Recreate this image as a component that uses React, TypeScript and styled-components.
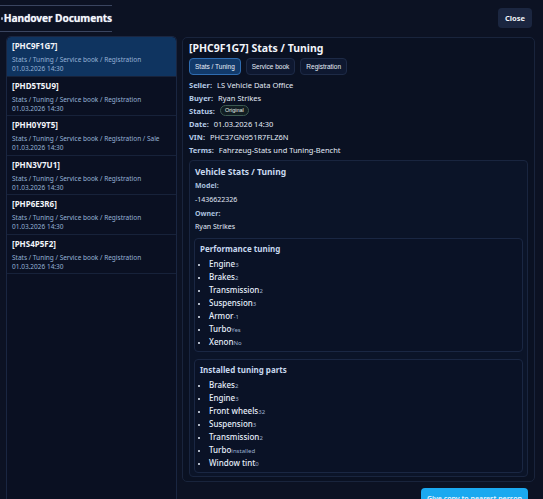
import React, { useState } from "react";
import styled, { createGlobalStyle } from "styled-components";

const GlobalStyle = createGlobalStyle`
  html, body {
    margin: 0;
    padding: 0;
    background: #0c1223;
    height: 100%;
    overflow: hidden;
  }
  * { box-sizing: border-box; }
  body {
    font-family: "Noto Sans", "Open Sans", sans-serif;
    color: #e6eefa;
  }
`;

interface Doc {
  code: string;
  pages: string;
  date: string;
}

const docs: Doc[] = [
  { code: "PHC9F1G7", pages: "Stats / Tuning / Service book / Registration", date: "01.03.2026 14:30" },
  { code: "PHD5T5U9", pages: "Stats / Tuning / Service book / Registration", date: "01.03.2026 14:30" },
  { code: "PHH0Y9T5", pages: "Stats / Tuning / Service book / Registration / Sale", date: "01.03.2026 14:30" },
  { code: "PHN3V7U1", pages: "Stats / Tuning / Service book / Registration", date: "01.03.2026 14:30" },
  { code: "PHP6E3R6", pages: "Stats / Tuning / Service book / Registration", date: "01.03.2026 14:30" },
  { code: "PHS4P5F2", pages: "Stats / Tuning / Service book / Registration", date: "01.03.2026 14:30" },
];

const tabs = ["Stats / Tuning", "Service book", "Registration"];

const performance = [
  { name: "Engine", value: "3" },
  { name: "Brakes", value: "2" },
  { name: "Transmission", value: "2" },
  { name: "Suspension", value: "3" },
  { name: "Armor", value: "-1" },
  { name: "Turbo", value: "Yes" },
  { name: "Xenon", value: "No" },
];

const parts = [
  { name: "Brakes", value: "2" },
  { name: "Engine", value: "3" },
  { name: "Front wheels", value: "32" },
  { name: "Suspension", value: "3" },
  { name: "Transmission", value: "2" },
  { name: "Turbo", value: "installed" },
  { name: "Window tint", value: "0" },
];

const App: React.FC = () => {
  const [active, setActive] = useState<number>(0);
  const [tab, setTab] = useState<number>(0);
  const doc = docs[active];

  return (
    <>
      <GlobalStyle />
      <Page>
        <Header>
          <Title>
            <Dot />
            Handover Documents
          </Title>
          <CloseButton>Close</CloseButton>
        </Header>
        <Body>
          <Sidebar>
            {docs.map((d, i) => (
              <DocItem key={d.code} $active={i === active} onClick={() => setActive(i)}>
                <DocCode>[{d.code}]</DocCode>
                <DocMeta>{d.pages}</DocMeta>
                <DocMeta>{d.date}</DocMeta>
              </DocItem>
            ))}
          </Sidebar>
          <Main>
            <Panel>
              <PanelTitle>[{doc.code}] Stats / Tuning</PanelTitle>
              <Tabs>
                {tabs.map((t, i) => (
                  <Tab key={t} $active={i === tab} onClick={() => setTab(i)}>
                    {t}
                  </Tab>
                ))}
              </Tabs>
              <Fields>
                <Field><Label>Seller:</Label>LS Vehicle Data Office</Field>
                <Field><Label>Buyer:</Label>Ryan Strikes</Field>
                <Field><Label>Status:</Label><Badge>Original</Badge></Field>
                <Field><Label>Date:</Label>01.03.2026 14:30</Field>
                <Field><Label>VIN:</Label>PHC37GN951R7FLZ6N</Field>
                <Field><Label>Terms:</Label>Fahrzeug-Stats und Tuning-Bencht</Field>
              </Fields>
              <Card>
                <CardTitle>Vehicle Stats / Tuning</CardTitle>
                <InfoLabel>Model:</InfoLabel>
                <InfoValue>-1436622326</InfoValue>
                <InfoLabel>Owner:</InfoLabel>
                <InfoValue>Ryan Strikes</InfoValue>
                <SubCards>
                  <SubCard>
                    <SubTitle>Performance tuning</SubTitle>
                    <List>
                      {performance.map((p) => (
                        <li key={p.name}>{p.name}<Small>{p.value}</Small></li>
                      ))}
                    </List>
                  </SubCard>
                  <SubCard>
                    <SubTitle>Installed tuning parts</SubTitle>
                    <List>
                      {parts.map((p) => (
                        <li key={p.name}>{p.name}<Small>{p.value}</Small></li>
                      ))}
                    </List>
                  </SubCard>
                </SubCards>
              </Card>
            </Panel>
            <Footer>
              <GiveButton>Give copy to nearest person</GiveButton>
            </Footer>
          </Main>
        </Body>
      </Page>
    </>
  );
};

export default App;

const Page = styled.div`
  width: 543px;
  height: 499px;
  background: #0c1223;
  display: flex;
  flex-direction: column;
  overflow: hidden;
`;

const Header = styled.div`
  height: 36px;
  flex-shrink: 0;
  display: flex;
  align-items: center;
  justify-content: space-between;
  padding: 0 11px 0 0;
`;

const Title = styled.h1`
  margin: 0;
  display: flex;
  align-items: center;
  gap: 1px;
  width: 112px;
  height: 27px;
  padding-left: 1px;
  font-size: 10.2px;
  font-weight: 700;
  letter-spacing: -0.1px;
  color: #f4f7fc;
  white-space: nowrap;
  overflow: visible;
  border-top: 1px solid #3a4560;
  border-bottom: 1px solid #3a4560;
  text-shadow: 0 0 1px #9aa4b8;
`;

const Dot = styled.span`
  width: 3px;
  height: 3px;
  border-radius: 50%;
  background: #aab3c6;
`;

const CloseButton = styled.button`
  all: unset;
  cursor: pointer;
  padding: 5px 7px;
  border-radius: 4px;
  background: #1b2640;
  color: #f2f5fa;
  font-size: 7.5px;
  font-weight: 700;
`;

const Body = styled.div`
  flex: 1;
  display: grid;
  grid-template-columns: 171px 1fr;
  gap: 5px;
  padding: 0 8px 0 6px;
  min-height: 0;
`;

const Sidebar = styled.div`
  background: #0a1022;
  border: 1px solid #1a2641;
  border-bottom: none;
  border-radius: 5px 5px 0 0;
  height: 480px;
  overflow: hidden;
`;

const DocItem = styled.div<{ $active: boolean }>`
  height: 39.5px;
  padding: 3px 5px 0;
  cursor: pointer;
  background: ${(p) => (p.$active ? "#0f3460" : "transparent")};
  border-bottom: 1px solid #17223a;
  border-radius: ${(p) => (p.$active ? "4px 4px 0 0" : "0")};
`;

const DocCode = styled.div`
  font-size: 8px;
  font-weight: 700;
  color: #f3f6fb;
  line-height: 12px;
  margin-bottom: 3px;
`;

const DocMeta = styled.div`
  font-size: 6.5px;
  line-height: 9px;
  color: #96b2d6;
`;

const Main = styled.div`
  display: flex;
  flex-direction: column;
  padding-top: 1px;
`;

const Panel = styled.div`
  background: #0a1122;
  border: 1px solid #19243c;
  border-radius: 5px;
  padding: 3px 6px 4px;
`;

const PanelTitle = styled.h2`
  margin: 0 0 3px 0;
  font-size: 10.5px;
  font-weight: 700;
  line-height: 14px;
  color: #f2f5fb;
`;

const Tabs = styled.div`
  display: flex;
  gap: 5px;
  margin-bottom: 3px;
`;

const Tab = styled.button<{ $active: boolean }>`
  all: unset;
  cursor: pointer;
  height: 15px;
  padding: 0 5px;
  display: flex;
  align-items: center;
  border-radius: 4px;
  font-family: "Liberation Sans", Arial, sans-serif;
  font-size: 6.5px;
  color: #e8eef8;
  background: ${(p) => (p.$active ? "#123a6a" : "#0e1830")};
  border: 1px solid ${(p) => (p.$active ? "#2f6cb0" : "#1d2a46")};
`;

const Fields = styled.div`
  display: flex;
  flex-direction: column;
`;

const Field = styled.div`
  display: flex;
  align-items: center;
  height: 13px;
  font-size: 7.5px;
  color: #e3ebf7;
`;

const Label = styled.span`
  font-weight: 700;
  color: #b5cbe8;
  margin-right: 5px;
`;

const Badge = styled.span`
  font-family: "Liberation Sans", Arial, sans-serif;
  font-size: 5.5px;
  line-height: 7px;
  padding: 1px 4px;
  border-radius: 6px;
  border: 1px solid #3c5a52;
  background: #111d22;
  color: #e6efe8;
`;

const Card = styled.div`
  margin-top: 4px;
  background: #0b1428;
  border: 1px solid #19253f;
  border-radius: 4px;
  padding: 5px 4px 3px;
`;

const CardTitle = styled.div`
  font-size: 8.5px;
  font-weight: 700;
  color: #c9daf0;
  line-height: 12px;
  margin-bottom: 1px;
  padding-left: 1px;
`;

const InfoLabel = styled.div`
  font-size: 7px;
  font-weight: 700;
  color: #a9c0df;
  line-height: 13.8px;
  padding-left: 1px;
`;

const InfoValue = styled.div`
  font-size: 7px;
  color: #e1e9f6;
  line-height: 13.8px;
  padding-left: 1px;
`;

const SubCards = styled.div`
  display: flex;
  flex-direction: column;
  gap: 7px;
  margin-top: 4px;
`;

const SubCard = styled.div`
  border: 1px solid #1a2743;
  border-radius: 4px;
  background: #0a1226;
  padding: 4px 5px 3px;
`;

const SubTitle = styled.div`
  font-size: 8px;
  font-weight: 700;
  color: #c7d8ef;
  line-height: 12px;
  margin-bottom: 2px;
`;

const List = styled.ul`
  margin: 0;
  padding-left: 9px;
  list-style: disc;
  li {
    height: 13px;
    font-size: 8px;
    font-weight: 500;
    color: #e6eefa;
    line-height: 13px;
    &::marker {
      font-size: 7px;
    }
  }
`;

const Small = styled.span`
  font-size: 6px;
  line-height: 1;
  font-weight: 400;
  color: #9ab0d0;
`;

const Footer = styled.div`
  display: flex;
  justify-content: flex-end;
  padding: 6px 7px 0 0;
`;

const GiveButton = styled.button`
  all: unset;
  cursor: pointer;
  padding: 6px 6px;
  border-radius: 4px;
  background: #1aa9f0;
  color: #eaf6ff;
  font-size: 7px;
  font-weight: 600;
`;
